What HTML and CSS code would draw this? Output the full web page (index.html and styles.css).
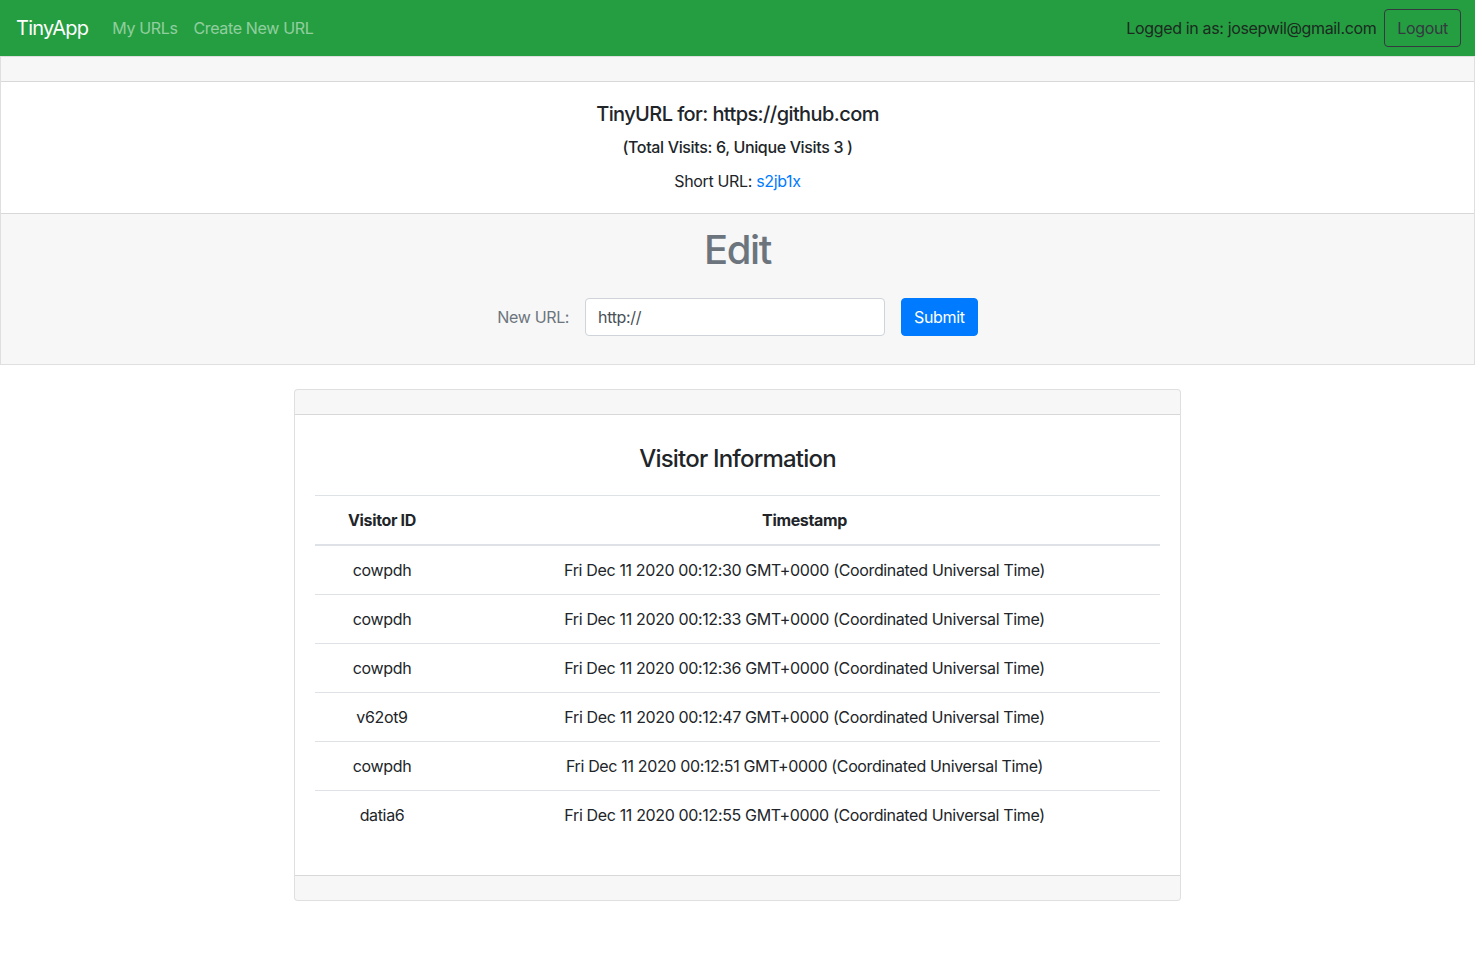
FILE: index.html
```html
<!DOCTYPE html>
<html lang="en">
<head>
<meta charset="utf-8">
<title>TinyApp</title>
<link rel="stylesheet" href="styles.css">
</head>
<body>
<nav class="navbar">
  <div class="nav-left">
    <a class="brand" href="#">TinyApp</a>
    <a class="nav-link" href="#">My URLs</a>
    <a class="nav-link" href="#">Create New URL</a>
  </div>
  <div class="nav-right">
    <span class="nav-text">Logged in as: josepwil@gmail.com</span>
    <button class="btn btn-outline-dark">Logout</button>
  </div>
</nav>

<div class="card card-full">
  <div class="card-header"></div>
  <div class="card-body center">
    <h5 class="card-title">TinyURL for: https://github.com</h5>
    <h6 class="card-subtitle">(Total Visits: 6, Unique Visits 3 )</h6>
    <p class="card-text">Short URL: <a href="#" class="link">s2jb1x</a></p>
  </div>
  <div class="card-footer center">
    <h1 class="edit-title">Edit</h1>
    <form class="edit-form">
      <label class="form-label" for="longURL">New URL:</label>
      <input class="form-control" id="longURL" type="text" value="http://">
      <button type="button" class="btn btn-primary">Submit</button>
    </form>
  </div>
</div>

<div class="card card-visitors">
  <div class="card-header"></div>
  <div class="card-body">
    <h3 class="visitor-title">Visitor Information</h3>
    <table class="table">
      <thead>
        <tr><th class="col-id">Visitor ID</th><th>Timestamp</th></tr>
      </thead>
      <tbody>
        <tr><td>cowpdh</td><td>Fri Dec 11 2020 00:12:30 GMT+0000 (Coordinated Universal Time)</td></tr>
        <tr><td>cowpdh</td><td>Fri Dec 11 2020 00:12:33 GMT+0000 (Coordinated Universal Time)</td></tr>
        <tr><td>cowpdh</td><td>Fri Dec 11 2020 00:12:36 GMT+0000 (Coordinated Universal Time)</td></tr>
        <tr><td>v62ot9</td><td>Fri Dec 11 2020 00:12:47 GMT+0000 (Coordinated Universal Time)</td></tr>
        <tr><td>cowpdh</td><td>Fri Dec 11 2020 00:12:51 GMT+0000 (Coordinated Universal Time)</td></tr>
        <tr><td>datia6</td><td>Fri Dec 11 2020 00:12:55 GMT+0000 (Coordinated Universal Time)</td></tr>
      </tbody>
    </table>
  </div>
  <div class="card-footer"></div>
</div>
</body>
</html>
```

FILE: styles.css
```css
* { box-sizing: border-box; }
html, body {
  margin: 0;
  padding: 0;
}
body {
  font-family: "Inter", "Liberation Sans", sans-serif;
  font-size: 16px;
  line-height: 1.5;
  color: #212529;
  background: #fff;
  letter-spacing: -0.35px;
}
h1, h3, h5, h6, p { margin: 0; font-weight: 500; }
p { font-weight: 400; }

.navbar {
  height: 56px;
  background: #249e40;
  display: flex;
  align-items: center;
  justify-content: space-between;
  padding: 8px 14px 8px 16px;
}
.nav-left, .nav-right { display: flex; align-items: center; }
.brand {
  font-size: 20px;
  line-height: 30px;
  color: #fff;
  text-decoration: none;
  margin-right: 16px;
  letter-spacing: -0.75px;
}
.nav-link {
  color: rgba(255,255,255,.5);
  text-decoration: none;
  padding: 8px;
}
.nav-text { color: #1c2a20; }
.btn {
  font-family: inherit;
  font-size: 16px;
  line-height: 24px;
  padding: 6px 12px;
  border-radius: 4px;
  border: 1px solid transparent;
  cursor: pointer;
  letter-spacing: -0.35px;
}
.btn-outline-dark {
  margin-left: 8px;
  color: #343a40;
  border-color: #343a40;
  background: transparent;
}
.btn-primary {
  color: #fff;
  background: #007bff;
  border-color: #007bff;
}

.card {
  border: 1px solid rgba(0,0,0,.125);
  background: #fff;
  display: flex;
  flex-direction: column;
}
.card-full { border-radius: 0; }
.card-visitors {
  width: 887px;
  margin: 24px auto 0;
  border-radius: 4px;
}
.card-header {
  height: 25px;
  background: rgba(0,0,0,.03);
  border-bottom: 1px solid rgba(0,0,0,.125);
}
.card-visitors .card-header { border-radius: 3px 3px 0 0; }
.card-body { padding: 20px; }
.card-footer {
  padding: 12px 20px;
  background: rgba(0,0,0,.03);
  border-top: 1px solid rgba(0,0,0,.125);
}
.card-visitors .card-footer { height: 25px; padding: 0; border-radius: 0 0 3px 3px; }
.center { text-align: center; }

.card-title { font-size: 20px; line-height: 24px; margin-bottom: 12px; letter-spacing: -0.6px; }
.card-subtitle { font-size: 16px; line-height: 19px; margin-bottom: 12px; }
.link { color: #007bff; text-decoration: none; }

.edit-title {
  font-size: 40px;
  line-height: 48px;
  color: #6c757d;
  letter-spacing: -1.4px;
}
.edit-form {
  display: flex;
  justify-content: center;
  align-items: center;
  gap: 16px;
  margin: 24px 0 16px;
}
.form-label { color: #6c757d; }
.form-control {
  width: 300px;
  height: 38px;
  padding: 6px 12px;
  font-family: inherit;
  font-size: 16px;
  color: #495057;
  border: 1px solid #ced4da;
  border-radius: 4px;
  background: #fff;
  letter-spacing: -0.35px;
}

.visitor-title {
  text-align: center;
  font-size: 24px;
  line-height: 29px;
  margin: 9px 0 22px;
  letter-spacing: -0.8px;
}
.table {
  width: 100%;
  border-collapse: collapse;
  margin-bottom: 16px;
  text-align: center;
}
.table th, .table td {
  padding: 12px;
  line-height: 24px;
  border-top: 1px solid #dee2e6;
}
.table th { font-weight: 700; }
.table thead th { border-bottom: 2px solid #dee2e6; }
.table tbody tr:first-child td { border-top: none; }
.col-id { width: 134px; }
```
